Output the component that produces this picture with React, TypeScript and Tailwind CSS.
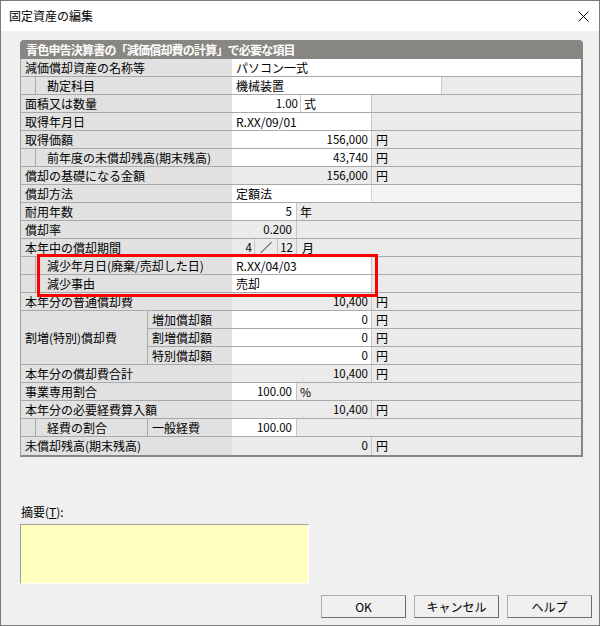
import React from "react";

type P = { children?: React.ReactNode };

function Row({ children }: P) {
  return <div className="flex h-[18px] border-b border-[#a9a9a9]">{children}</div>;
}

function Label({ children }: P) {
  return <div className="w-[211px] shrink-0 bg-[#e1e1e1] pl-[4px] leading-[17px] whitespace-nowrap">{children}</div>;
}

function IndentLabel({ children }: P) {
  return (
    <div className="flex w-[211px] shrink-0 bg-[#e1e1e1]">
      <div className="w-[15px] shrink-0 border-r border-[#a9a9a9]" />
      <div className="flex-1 pl-[11px] leading-[17px] whitespace-nowrap">{children}</div>
    </div>
  );
}

function Num({ children, white }: P & { white?: boolean }) {
  return (
    <div
      className={
        "w-[140px] shrink-0 border-r border-[#c6c6c6] pr-[3px] text-right leading-[17px] text-[11.5px] " +
        (white ? "bg-white" : "bg-[#ebebeb]")
      }
    >
      {children}
    </div>
  );
}

function TextVal({ children }: P) {
  return (
    <div className="w-[140px] shrink-0 border-r border-[#c6c6c6] bg-white pl-[4px] leading-[17px] whitespace-nowrap">
      {children}
    </div>
  );
}

function Unit({ children }: P) {
  return <div className="flex-1 bg-[#ebebeb] pl-[4px] leading-[17px]">{children}</div>;
}

function Short({ children, white }: P & { white?: boolean }) {
  return (
    <div
      className={
        "w-[65px] shrink-0 border-r border-[#c6c6c6] pr-[4px] text-right leading-[17px] text-[11.5px] " +
        (white ? "bg-white" : "bg-[#ebebeb]")
      }
    >
      {children}
    </div>
  );
}

function ShortUnit({ children }: P) {
  return <div className="flex-1 bg-[#ebebeb] pl-[3px] leading-[17px]">{children}</div>;
}

function SubRow({ label, value, last }: { label: string; value: string; last?: boolean }) {
  return (
    <div className={"flex h-[18px] " + (last ? "" : "border-b border-[#a9a9a9]")}>
      <div className="w-[84px] shrink-0 bg-[#e1e1e1] pl-[4px] leading-[17px]">{label}</div>
      <Num white>{value}</Num>
      <Unit>円</Unit>
    </div>
  );
}

export default function App() {
  return (
    <div className="relative w-[600px] h-[626px] bg-[#f0f0f0] border border-[#7a7a7a] text-[12px] text-black font-['Noto_Sans_CJK_JP','Noto_Sans',sans-serif] overflow-hidden">
      {/* title bar */}
      <div className="flex h-[30px] items-center justify-between bg-white pl-[8px] pr-[10px]">
        <span className="text-[12px]">固定資産の編集</span>
        <svg width="11" height="11" viewBox="0 0 11 11">
          <path d="M0.5 0.5 L10.5 10.5 M10.5 0.5 L0.5 10.5" stroke="#000" strokeWidth="1" />
        </svg>
      </div>

      {/* panel */}
      <div className="pl-[19px] pt-[9px]">
        <div className="w-[563px]">
          <div className="h-[19px] rounded-t-[4px] bg-[#878680] pl-[6px] text-[12px] font-bold leading-[19px] tracking-[-0.8px] text-white whitespace-nowrap">
            青色申告決算書の「減価償却費の計算」で必要な項目
          </div>
          <div className="border-l border-l-[#a0a0a0] border-r-2 border-b-2 border-r-[#878680] border-b-[#878680]">
            <Row>
              <Label>減価償却資産の名称等</Label>
              <div className="flex-1 bg-white pl-[4px] leading-[17px]">パソコン一式</div>
            </Row>
            <Row>
              <IndentLabel>勘定科目</IndentLabel>
              <div className="w-[210px] shrink-0 border-r border-[#c6c6c6] bg-white pl-[4px] leading-[17px]">機械装置</div>
              <Unit />
            </Row>
            <Row>
              <Label>面積又は数量</Label>
              <div className="w-[69px] shrink-0 border-r border-[#c6c6c6] bg-white pr-[2px] text-right text-[11.5px] leading-[17px]">1.00</div>
              <div className="w-[71px] shrink-0 border-r border-[#c6c6c6] bg-white pl-[3px] leading-[17px]">式</div>
              <Unit />
            </Row>
            <Row>
              <Label>取得年月日</Label>
              <TextVal>R.XX/09/01</TextVal>
              <Unit />
            </Row>
            <Row>
              <Label>取得価額</Label>
              <Num white>156,000</Num>
              <Unit>円</Unit>
            </Row>
            <Row>
              <IndentLabel>前年度の未償却残高(期末残高)</IndentLabel>
              <Num white>43,740</Num>
              <Unit>円</Unit>
            </Row>
            <Row>
              <Label>償却の基礎になる金額</Label>
              <Num>156,000</Num>
              <Unit>円</Unit>
            </Row>
            <Row>
              <Label>償却方法</Label>
              <div className="w-[140px] shrink-0 border-r border-[#d4d4d4] bg-white pl-[4px] leading-[17px]">定額法</div>
              <div className="flex-1 bg-[#f3f3f3]" />
            </Row>
            <Row>
              <Label>耐用年数</Label>
              <Short white>5</Short>
              <ShortUnit>年</ShortUnit>
            </Row>
            <Row>
              <Label>償却率</Label>
              <Short>0.200</Short>
              <ShortUnit />
            </Row>
            <Row>
              <Label>本年中の償却期間</Label>
              <div className="w-[23px] shrink-0 border-r border-[#c6c6c6] bg-[#ebebeb] pr-[2px] text-right text-[11.5px] leading-[17px]">4</div>
              <div className="w-[23px] shrink-0 border-r border-[#c6c6c6] bg-[#ebebeb] text-center leading-[17px]">／</div>
              <div className="w-[19px] shrink-0 border-r border-[#c6c6c6] bg-[#ebebeb] pr-[3px] text-right text-[11.5px] leading-[17px]">12</div>
              <div className="flex-1 bg-[#ebebeb] pl-[5px] leading-[17px]">月</div>
            </Row>
            <Row>
              <IndentLabel>減少年月日(廃棄/売却した日)</IndentLabel>
              <TextVal>R.XX/04/03</TextVal>
              <Unit />
            </Row>
            <Row>
              <IndentLabel>減少事由</IndentLabel>
              <TextVal>売却</TextVal>
              <Unit />
            </Row>
            <Row>
              <Label>本年分の普通償却費</Label>
              <Num>10,400</Num>
              <Unit>円</Unit>
            </Row>
            <div className="flex h-[54px] border-b border-[#a9a9a9]">
              <div className="flex w-[127px] shrink-0 items-center border-r border-[#a9a9a9] bg-[#e1e1e1] pl-[4px] whitespace-nowrap">
                割増(特別)償却費
              </div>
              <div className="flex flex-1 flex-col">
                <SubRow label="増加償却額" value="0" />
                <SubRow label="割増償却額" value="0" />
                <SubRow label="特別償却額" value="0" last />
              </div>
            </div>
            <Row>
              <Label>本年分の償却費合計</Label>
              <Num>10,400</Num>
              <Unit>円</Unit>
            </Row>
            <Row>
              <Label>事業専用割合</Label>
              <Short white>100.00</Short>
              <ShortUnit>%</ShortUnit>
            </Row>
            <Row>
              <Label>本年分の必要経費算入額</Label>
              <Num>10,400</Num>
              <Unit>円</Unit>
            </Row>
            <Row>
              <div className="flex w-[211px] shrink-0 bg-[#e1e1e1]">
                <div className="w-[15px] shrink-0 border-r border-[#a9a9a9]" />
                <div className="w-[112px] shrink-0 border-r border-[#a9a9a9] pl-[11px] leading-[17px]">経費の割合</div>
                <div className="flex-1 pl-[4px] leading-[17px]">一般経費</div>
              </div>
              <Short white>100.00</Short>
              <ShortUnit />
            </Row>
            <div className="flex h-[18px]">
              <Label>未償却残高(期末残高)</Label>
              <Num>0</Num>
              <Unit>円</Unit>
            </div>
          </div>
        </div>

        {/* summary */}
        <div className="mt-[48px] h-[14px] pl-[1px] text-[12px] leading-[14px]">
          摘要(<span className="underline">T</span>):
        </div>
        <div className="mt-[5px] h-[60px] w-[289px] border border-t-[#a0a0a0] border-l-[#a0a0a0] border-r-white border-b-white bg-[#ffffc0]" />
      </div>

      {/* buttons */}
      <div className="mt-[11px] flex gap-[8px] pl-[320px]">
        <button className="h-[23px] w-[85px] border border-[#adadad] border-r-[#6d6d6d] border-b-[#6d6d6d] bg-[#f0f0f0] text-[12px] leading-[20px]">OK</button>
        <button className="h-[23px] w-[85px] border border-[#adadad] border-r-[#6d6d6d] border-b-[#6d6d6d] bg-[#f0f0f0] text-[12px] leading-[20px]">キャンセル</button>
        <button className="h-[23px] w-[85px] border border-[#adadad] border-r-[#6d6d6d] border-b-[#6d6d6d] bg-[#f0f0f0] text-[12px] leading-[20px]">ヘルプ</button>
      </div>

      {/* red annotation box */}
      <div className="absolute left-[36px] top-[253px] h-[43px] w-[341px] border-[3px] border-[#ff0000]" />
    </div>
  );
}
